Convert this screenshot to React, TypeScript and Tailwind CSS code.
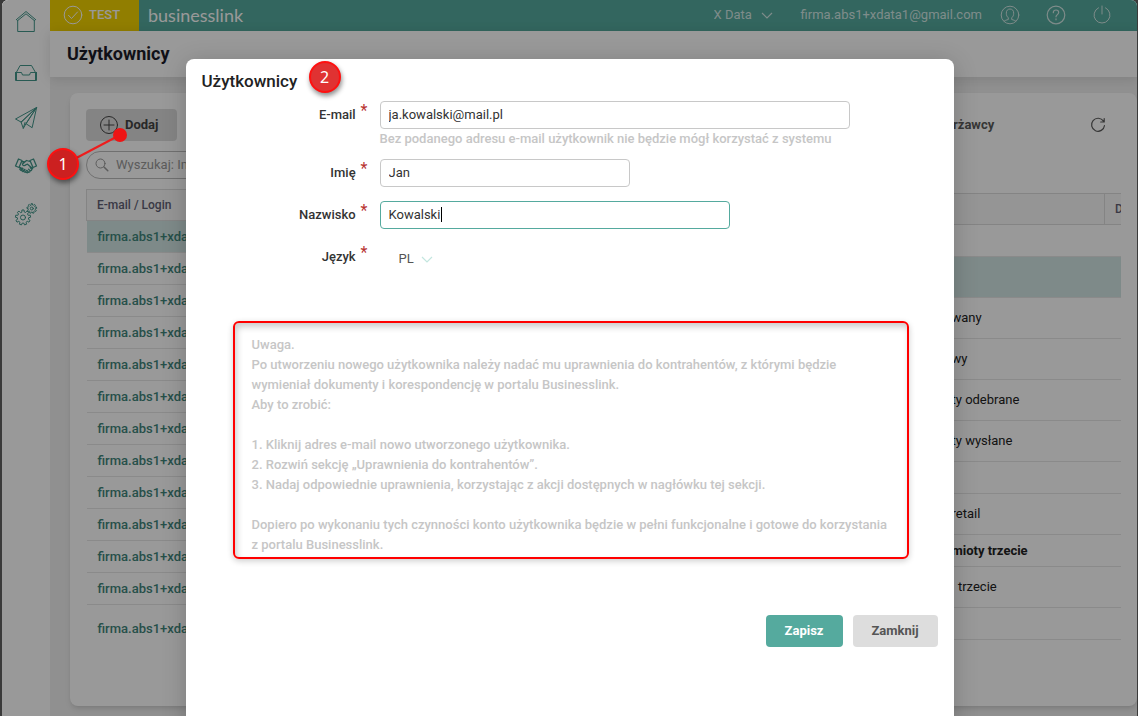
import { useState } from "react"
import type { ReactNode } from "react"

interface PermissionRow {
  label: string
  tall?: boolean
  bold?: boolean
  active?: boolean
}

const users: string[] = Array.from({ length: 13 }, () => "firma.abs1+xdata")

const permissions: PermissionRow[] = [
  { label: "" },
  { label: "", tall: true, active: true },
  { label: "wany", tall: true },
  { label: "wy", tall: true },
  { label: "ty odebrane", tall: true },
  { label: "ty wysłane", tall: true },
  { label: "" },
  { label: "retail", tall: true },
  { label: "mioty trzecie", bold: true },
  { label: "\u00a0\u00a0trzecie", tall: true },
  { label: "" },
]

function gearPath(cx: number, cy: number, outer: number, inner: number, teeth: number) {
  const points: string[] = []
  const step = (Math.PI * 2) / teeth
  for (let i = 0; i < teeth; i++) {
    const a = i * step - Math.PI / 2
    const corners: [number, number][] = [
      [inner, -0.3],
      [outer, -0.2],
      [outer, 0.2],
      [inner, 0.3],
    ]
    corners.forEach(([r, o]) => {
      points.push(`${(cx + r * Math.cos(a + o * step)).toFixed(2)} ${(cy + r * Math.sin(a + o * step)).toFixed(2)}`)
    })
  }
  return `M${points.join("L")}Z`
}

function Icon({ size, className, children }: { size: number; className?: string; children: ReactNode }) {
  return (
    <svg
      width={size}
      height={size}
      viewBox={`0 0 ${size} ${size}`}
      fill="none"
      stroke="currentColor"
      strokeLinejoin="round"
      strokeLinecap="round"
      className={className}
      aria-hidden="true"
    >
      {children}
    </svg>
  )
}

function Chevron({ className }: { className?: string }) {
  return (
    <svg width="12" height="7" viewBox="0 0 12 7" fill="none" stroke="currentColor" className={className} aria-hidden="true">
      <path d="M1 1l5 5 5-5" strokeWidth="1.2" />
    </svg>
  )
}

const navigation = [
  {
    label: "Start",
    icon: (
      <Icon size={24}>
        <path d="M2.5 9.5L12 1.5l9.5 8M2.5 9.5l1 1.2L12 3.8l8.5 6.9 1-1.2M3.7 10.5V21.5h16.6V10.5" />
      </Icon>
    ),
  },
  {
    label: "Skrzynka",
    icon: (
      <Icon size={24}>
        <path d="M6.500 7.500h11l4 7v8h-19v-8zM1.500 14.500h6l1 2.500h7l1-2.500h6M1.500 14.500v8h21v-8" />
      </Icon>
    ),
  },
  {
    label: "Wysyłka",
    icon: (
      <Icon size={24}>
        <path d="M22.500 1.500L1.500 13l5.500 3zM22.500 1.500L7 16l2.300 6.300 2.700-4.600zM22.500 1.500L12 17.700l5.800 3.800zM9.300 22.300L11 16.500" />
      </Icon>
    ),
  },
  {
    label: "Kontrahenci",
    icon: (
      <Icon size={24} className="stroke-[1.3]">
        <path d="M4.500 5l3.500 1.500-3 7-3.500-1.500zM19.500 5L16 6.500l3 7 3.500-1.500zM8 7.500l3 .3M16 7.500l-3.500-1-4 3.500c0 2 2 2.200 3.800.6l1.200-.4 5 4.300M5.300 13l2 1.500M7 13.500l-1.200 1.700 1 1 1.700-2M9 14.500l-1.400 2 1.200 1 1.600-2M11 15.500l-1.300 2 1.300.8 1.500-1.800M11.500 18l1.500.8 1.500-.6M14.500 18.200l-1.500-1.700M14.500 18.200c1.200 0 1.700-.7 1.600-1.500l-1.600-1.600M16.100 16.700c1.300-.1 1.800-.7 1.700-1.500l-1.600-1.700M17.800 15.200l.9-.9" />
      </Icon>
    ),
  },
  {
    label: "Ustawienia",
    icon: (
      <Icon size={24}>
        <path d={gearPath(9, 15.5, 7.6, 5.7, 9)} />
        <circle cx="9" cy="15.5" r="2.5" />
        <path d={gearPath(17.8, 6.5, 4.9, 3.6, 9)} />
        <circle cx="17.8" cy="6.5" r="1.5" />
      </Icon>
    ),
  },
]

function Sidebar() {
  return (
    <nav className="flex w-12 shrink-0 flex-col items-center gap-6 bg-white pt-[10px] text-[#43968a]">
      {navigation.map((item) => (
        <a key={item.label} href="#" aria-label={item.label}>
          {item.icon}
        </a>
      ))}
    </nav>
  )
}

function TopBar() {
  return (
    <header className="flex h-[31px] shrink-0 items-center bg-[#55aa9e] pb-px text-[13px] text-white">
      <div className="-mb-px flex h-[31px] w-[89px] items-center gap-[6px] bg-[#f2d200] pb-px pl-[13px] font-medium">
        <Icon size={20}>
          <circle cx="10" cy="10" r="8.800" />
          <path d="M5.500 10.300l3 3.200 6-6.500" />
        </Icon>
        <span>TEST</span>
      </div>
      <span className="ml-[9px] font-['Lato',sans-serif] text-lg">businesslink</span>
      <div className="ml-auto flex items-center text-[#d3e9e6]">
        <label className="relative flex items-center">
          <select aria-label="Firma" className="appearance-none bg-transparent pr-5">
            <option>X Data</option>
          </select>
          <Chevron className="pointer-events-none absolute right-0" />
        </label>
        <a href="#" className="ml-7">
          firma.abs1+xdata1@gmail.com
        </a>
        <div className="ml-[18px] mr-[25px] flex items-center gap-[26px]">
          <button aria-label="Konto">
            <Icon size={20}>
              <circle cx="10" cy="10" r="8.800" />
              <path d="M4 16.300c.8-1 2.500-1.200 4.300-1.800v-1.700C7 11.700 6.300 10.300 6.300 8.200 6.300 5.500 7.800 4 10 4s3.700 1.500 3.700 4.200c0 2.100-.7 3.500-2 4.600v1.700c1.800.6 3.500.8 4.300 1.800" />
            </Icon>
          </button>
          <button aria-label="Pomoc">
            <Icon size={20} className="stroke-[1.2]">
              <circle cx="10" cy="10" r="8.800" />
              <path d="M7.300 7.700c0-1.700 1.100-2.700 2.700-2.700s2.700 1 2.700 2.500c0 2-2.700 2.200-2.700 4.300M10 13.800v1" />
            </Icon>
          </button>
          <button aria-label="Wyloguj">
            <Icon size={20}>
              <path d="M6.500 2.800a8 8 0 1 0 7 0M10 1v8" />
            </Icon>
          </button>
        </div>
      </div>
    </header>
  )
}

function UsersCard() {
  return (
    <section className="min-w-0 flex-1 overflow-hidden rounded-lg bg-white px-4 pt-4 shadow-md">
      <button className="flex h-8 w-[91px] items-center gap-[6px] rounded bg-[#dddddd] pl-[13px] text-[13px] font-bold text-[#444444]">
        <Icon size={20}>
          <circle cx="10" cy="10" r="8.500" />
          <path d="M10 5v10M5 10h10" />
        </Icon>
        Dodaj
      </button>
      <div className="relative mt-[10px] flex items-center">
        <Icon size={14} className="absolute left-[9px] text-[#999999]">
          <circle cx="5.500" cy="5.500" r="4.500" />
          <path d="M9 9l3.800 3.800" strokeWidth="1.500" />
        </Icon>
        <input
          type="search"
          aria-label="Wyszukaj"
          placeholder="Wyszukaj: Imię"
          className="h-7 w-32 rounded-full border border-[#bbbbbb] bg-white pb-px pl-[29px] text-[13px] placeholder:text-[#999999]"
        />
      </div>
      <table className="mt-[10px] w-full border-collapse text-left text-[13px]">
        <thead>
          <tr className="h-[31px] border border-[#dddddd] bg-[#f8f8f8]">
            <th className="whitespace-nowrap pl-[10px] text-xs font-medium text-[#606074]">E-mail / Login</th>
          </tr>
        </thead>
        <tbody>
          {users.map((email, i) => (
            <tr
              key={i}
              className={
                i === 0
                  ? "h-8 border-b border-[#e6e6e6] bg-[#d3e7e4]"
                  : i === users.length - 1
                    ? "h-12"
                    : "h-8 border-b border-[#e6e6e6]"
              }
            >
              <td className="whitespace-nowrap pl-[11px]">
                <a href="#" className="font-medium text-[#3f857b]">
                  {email}
                </a>
              </td>
            </tr>
          ))}
        </tbody>
      </table>
    </section>
  )
}

function PermissionsCard() {
  return (
    <section className="w-[220px] shrink-0 rounded-lg bg-white px-4 pt-[22px] shadow-md">
      <div className="flex h-5 items-center justify-between pl-5 pr-[15px] text-[13px] font-bold text-[#5a5a5a]">
        <h2>rżawcy</h2>
        <button aria-label="Odśwież">
          <Icon size={16} className="stroke-[1.2]">
            <path d="M13.500 4.200A6.500 6.500 0 1 0 14.500 8.500M14.200 1.500v3.500h-3.500" />
          </Icon>
        </button>
      </div>
      <div className="mt-[58px] overflow-hidden">
        <table className="w-[260px] table-fixed border-collapse text-left text-[13px]">
          <thead>
            <tr className="h-[31px] border border-[#dddddd] bg-[#f8f8f8]">
              <th className="w-[171px] border-r border-[#dddddd]" />
              <th className="pl-[10px] text-xs font-medium text-[#606074]">D</th>
            </tr>
          </thead>
          <tbody className="text-[#222222]">
            {permissions.map((row, i) => (
              <tr
                key={i}
                className={`border-b border-[#e6e6e6] ${row.tall ? "h-[41px]" : "h-8"} ${row.active ? "bg-[#d3e7e4]" : ""}`}
              >
                <td colSpan={2} className={`whitespace-nowrap pl-[18px] ${row.bold ? "font-bold" : ""}`}>
                  {row.label}
                </td>
              </tr>
            ))}
          </tbody>
        </table>
      </div>
    </section>
  )
}

function Field({ id, label, children }: { id: string; label: string; children: ReactNode }) {
  return (
    <div className="flex">
      <label htmlFor={id} className="flex h-7 w-[166px] shrink-0 items-center justify-end font-medium text-[#333333]">
        {label}
        <span className="ml-[5px] self-start text-base leading-5 font-normal text-[#b83232]">*</span>
      </label>
      <div className="ml-3 min-w-0 flex-1">{children}</div>
    </div>
  )
}

const inputClass =
  "block h-7 w-full rounded border border-[#c8c8c8] bg-white px-2 pb-[2px] text-[13px] text-[#333333] outline-none"

function Badge({ children, className }: { children: string; className: string }) {
  return (
    <span
      className={`absolute flex h-8 w-8 items-center justify-center rounded-full border-2 border-[#ff1010] font-['Noto_Sans',sans-serif] text-base text-white shadow-[1px_3px_5px_rgba(0,0,0,0.45)] ${className}`}
    >
      {children}
    </span>
  )
}

function UserDialog() {
  const [email, setEmail] = useState("ja.kowalski@mail.pl")
  const [firstName, setFirstName] = useState("Jan")
  const [lastName, setLastName] = useState("Kowalski")

  return (
    <form
      role="dialog"
      aria-labelledby="dialog-title"
      className="relative mx-auto mt-[59px] min-h-screen max-w-3xl rounded-lg bg-white px-4 pt-[10px] text-[13px] shadow-[0_4px_24px_rgba(0,0,0,0.2)]"
    >
      <h2 id="dialog-title" className="text-[17px] leading-6 font-medium text-[#222222]">
        Użytkownicy
      </h2>
      <Badge className="left-[123px] top-[2px] bg-[#e03232]">2</Badge>

      <div className="mt-2">
        <Field id="email" label="E-mail">
          <div className="max-w-[470px]">
            <input id="email" type="email" value={email} onChange={(e) => setEmail(e.target.value)} className={inputClass} />
          </div>
          <p className="h-[30px] leading-5 font-medium text-[#c6c6c6]">
            Bez podanego adresu e-mail użytkownik nie będzie mógł korzystać z systemu
          </p>
        </Field>
        <Field id="first-name" label="Imię">
          <div className="max-w-[250px]">
            <input id="first-name" value={firstName} onChange={(e) => setFirstName(e.target.value)} className={inputClass} />
          </div>
        </Field>
        <div className="mt-[14px]">
          <Field id="last-name" label="Nazwisko">
            <div className="relative max-w-[350px]">
              <input
                id="last-name"
                autoFocus
                value={lastName}
                onChange={(e) => setLastName(e.target.value)}
                className={`${inputClass} caret-transparent focus:border-[#55aa9e]`}
              />
              {lastName === "Kowalski" && <span className="absolute left-[61px] top-[6px] h-[15px] w-px bg-black" />}
            </div>
          </Field>
        </div>
        <div className="mt-[14px]">
          <Field id="language" label="Język">
            <div className="relative flex h-8 w-[53px] items-center">
              <select id="language" className="w-full appearance-none bg-transparent pl-[19px] text-[#555555]">
                <option>PL</option>
              </select>
              <Chevron className="pointer-events-none absolute right-0 text-[#c3e6df]" />
            </div>
          </Field>
        </div>
      </div>

      <div className="ml-[31px] mr-[29px] mt-[46px] rounded-md border-2 border-[#ff0000] px-[17px] pt-3 pb-[2px] leading-5 font-medium text-[#c6c6c6] shadow-[0_2px_6px_rgba(0,0,0,0.2),inset_2px_4px_6px_rgba(0,0,0,0.2)]">
        <p>Uwaga.</p>
        <p>
          Po utworzeniu nowego użytkownika należy nadać mu uprawnienia do kontrahentów, z którymi będzie wymieniał
          dokumenty i korespondencję w portalu Businesslink.
        </p>
        <p>Aby to zrobić:</p>
        <div className="my-5">
          <p>1. Kliknij adres e-mail nowo utworzonego użytkownika.</p>
          <p>2. Rozwiń sekcję „Uprawnienia do kontrahentów”.</p>
          <p>3. Nadaj odpowiednie uprawnienia, korzystając z akcji dostępnych w nagłówku tej sekcji.</p>
        </div>
        <p>
          Dopiero po wykonaniu tych czynności konto użytkownika będzie w pełni funkcjonalne i gotowe do korzystania
          {" z\u00a0portalu Businesslink."}
        </p>
      </div>

      <div className="mt-14 flex justify-end gap-[10px] font-bold">
        <button type="submit" className="h-8 w-[77px] rounded bg-[#55aa9e] text-white">
          Zapisz
        </button>
        <button type="button" className="h-8 w-[85px] rounded bg-[#dddddd] text-[#555555]">
          Zamknij
        </button>
      </div>
    </form>
  )
}

export default function App() {
  return (
    <div className="h-screen overflow-hidden bg-[#3a3a3a] pl-[2px] pr-px font-['Roboto',sans-serif]">
      <div className="relative flex h-full overflow-hidden rounded-t-md bg-[#f0f0f0]">
        <Sidebar />
        <div className="flex min-w-0 flex-1 flex-col">
          <TopBar />
          <div className="flex h-[46px] shrink-0 items-center bg-white pl-[17px] shadow-[0_2px_12px_rgba(0,0,0,0.12)]">
            <h1 className="text-lg font-bold text-[#1c1c28]">Użytkownicy</h1>
          </div>
          <main className="flex min-h-0 flex-1 gap-4 pl-5 pt-4 pb-[10px]">
            <UsersCard />
            <PermissionsCard />
          </main>
        </div>

        {/* Modal */}
        <div className="absolute inset-0 overflow-hidden bg-black/40">
          <UserDialog />
        </div>

        {/* Step 1 pointer */}
        <svg className="absolute left-[60px] top-[120px]" width="70" height="50" aria-hidden="true">
          <path d="M1 45L58 15" stroke="#ee1c1c" strokeWidth="2" />
          <circle cx="58" cy="15" r="7" fill="#ee1414" />
        </svg>
        <Badge className="left-[45px] top-[148px] bg-[#cc2020]">1</Badge>
      </div>
    </div>
  )
}
